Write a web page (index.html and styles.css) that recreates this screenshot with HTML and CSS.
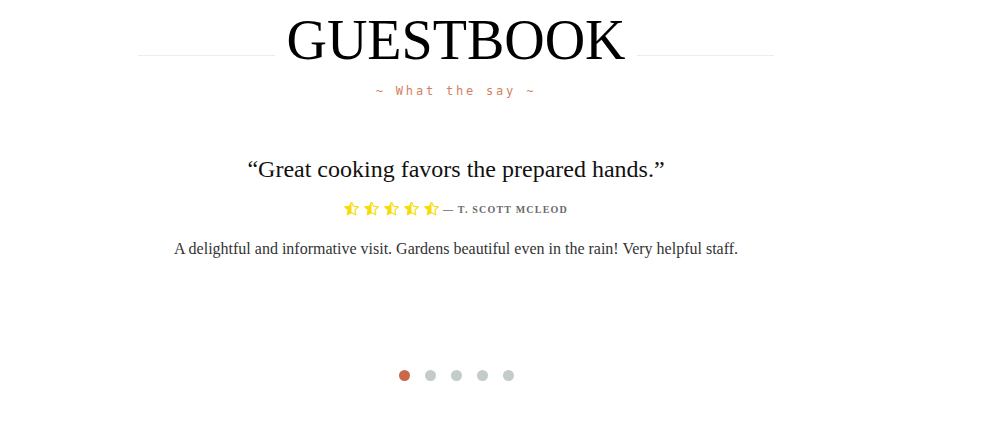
FILE: index.html
```html
<!DOCTYPE html>
<html>
<head>
<meta charset="utf-8">
<link rel="stylesheet" href="styles.css">
</head>
<body>
<section class="guestbook">
  <header class="heading">
    <span class="rule"></span>
    <h1 class="title">GUESTBOOK</h1>
    <span class="rule"></span>
  </header>
  <p class="subtitle">~ What the say ~</p>

  <div class="testimonial">
    <blockquote class="quote">“Great cooking favors the prepared hands.”</blockquote>
    <div class="byline">
      <span class="stars">
        <svg class="star" viewBox="64 120 1664 1560"><path d="M1250 957l257-250-356-52-66-10-30-60-159-322v963l59 31 318 168-60-355-12-66zm452-262l-363 354 86 500q5 33-6 51.5t-34 18.5q-17 0-40-12l-449-236-449 236q-23 12-40 12-23 0-34-18.5t-6-51.5l86-500-364-354q-32-32-23-59.5t54-34.5l502-73 225-455q20-41 49-41 28 0 49 41l225 455 502 73q45 7 54 34.5t-24 59.5z"/></svg>
        <svg class="star" viewBox="64 120 1664 1560"><path d="M1250 957l257-250-356-52-66-10-30-60-159-322v963l59 31 318 168-60-355-12-66zm452-262l-363 354 86 500q5 33-6 51.5t-34 18.5q-17 0-40-12l-449-236-449 236q-23 12-40 12-23 0-34-18.5t-6-51.5l86-500-364-354q-32-32-23-59.5t54-34.5l502-73 225-455q20-41 49-41 28 0 49 41l225 455 502 73q45 7 54 34.5t-24 59.5z"/></svg>
        <svg class="star" viewBox="64 120 1664 1560"><path d="M1250 957l257-250-356-52-66-10-30-60-159-322v963l59 31 318 168-60-355-12-66zm452-262l-363 354 86 500q5 33-6 51.5t-34 18.5q-17 0-40-12l-449-236-449 236q-23 12-40 12-23 0-34-18.5t-6-51.5l86-500-364-354q-32-32-23-59.5t54-34.5l502-73 225-455q20-41 49-41 28 0 49 41l225 455 502 73q45 7 54 34.5t-24 59.5z"/></svg>
        <svg class="star" viewBox="64 120 1664 1560"><path d="M1250 957l257-250-356-52-66-10-30-60-159-322v963l59 31 318 168-60-355-12-66zm452-262l-363 354 86 500q5 33-6 51.5t-34 18.5q-17 0-40-12l-449-236-449 236q-23 12-40 12-23 0-34-18.5t-6-51.5l86-500-364-354q-32-32-23-59.5t54-34.5l502-73 225-455q20-41 49-41 28 0 49 41l225 455 502 73q45 7 54 34.5t-24 59.5z"/></svg>
        <svg class="star" viewBox="64 120 1664 1560"><path d="M1250 957l257-250-356-52-66-10-30-60-159-322v963l59 31 318 168-60-355-12-66zm452-262l-363 354 86 500q5 33-6 51.5t-34 18.5q-17 0-40-12l-449-236-449 236q-23 12-40 12-23 0-34-18.5t-6-51.5l86-500-364-354q-32-32-23-59.5t54-34.5l502-73 225-455q20-41 49-41 28 0 49 41l225 455 502 73q45 7 54 34.5t-24 59.5z"/></svg>
      </span>
      <span class="author">— T. Scott McLeod</span>
    </div>
    <p class="message">A delightful and informative visit. Gardens beautiful even in the rain! Very helpful staff.</p>
  </div>

  <nav class="dots">
    <span class="dot active"></span>
    <span class="dot"></span>
    <span class="dot"></span>
    <span class="dot"></span>
    <span class="dot"></span>
  </nav>
</section>
</body>
</html>
```

FILE: styles.css
```css
html, body {
  margin: 0;
  padding: 0;
  background: #ffffff;
}

body {
  font-family: "Liberation Serif", "Times New Roman", serif;
  color: #111;
}

.guestbook {
  width: 636px;
  margin-left: 138px;
  padding-top: 12px;
}

.heading {
  display: flex;
  align-items: flex-end;
  gap: 11px;
}

.rule {
  flex: 1;
  height: 1px;
  background: #ececec;
  margin-bottom: 12px;
}

.title {
  margin: 0;
  font-size: 56px;
  font-weight: 400;
  line-height: 56px;
  color: #000;
}

.subtitle {
  margin: 15px 0 0;
  text-align: center;
  font-family: "DejaVu Sans Mono", monospace;
  font-size: 12px;
  letter-spacing: 2.8px;
  color: #d0835f;
  line-height: 16px;
}

.testimonial {
  margin-top: 55px;
  text-align: center;
}

.quote {
  margin: 0;
  font-size: 24px;
  line-height: 30px;
  color: #111;
}

.byline {
  margin-top: 18px;
  display: flex;
  justify-content: center;
  align-items: center;
  gap: 4px;
}

.stars {
  display: flex;
  gap: 5px;
}

.star {
  width: 15px;
  height: 14px;
  fill: #f7dc0d;
}

.author {
  font-size: 10px;
  font-weight: 700;
  text-transform: uppercase;
  letter-spacing: 1.2px;
  color: #6a6a6a;
}

.message {
  margin: 22px 0 0;
  font-size: 16px;
  line-height: 22px;
  color: #333;
}

.dots {
  margin-top: 110px;
  display: flex;
  justify-content: center;
  gap: 15px;
}

.dot {
  width: 11px;
  height: 11px;
  border-radius: 50%;
  background: #c3cccb;
}

.dot.active {
  background: #c8694a;
}
```
